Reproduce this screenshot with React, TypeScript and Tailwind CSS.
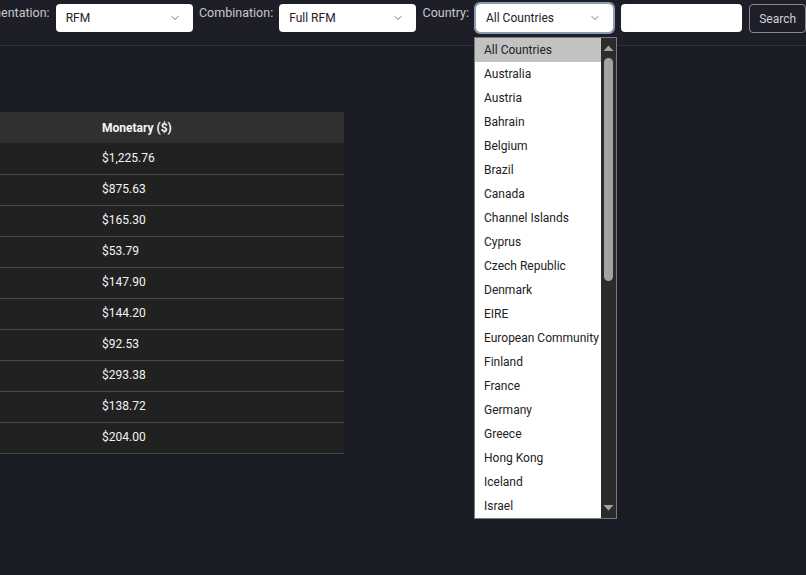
import { ChevronDown } from "lucide-react";

const countries = [
  "All Countries",
  "Australia",
  "Austria",
  "Bahrain",
  "Belgium",
  "Brazil",
  "Canada",
  "Channel Islands",
  "Cyprus",
  "Czech Republic",
  "Denmark",
  "EIRE",
  "European Community",
  "Finland",
  "France",
  "Germany",
  "Greece",
  "Hong Kong",
  "Iceland",
  "Israel",
];

const monetary = [
  "$1,225.76",
  "$875.63",
  "$165.30",
  "$53.79",
  "$147.90",
  "$144.20",
  "$92.53",
  "$293.38",
  "$138.72",
  "$204.00",
];

function Select({ value, width, focused }: { value: string; width: string; focused?: boolean }) {
  return (
    <div
      className={`${width} h-[28px] bg-white rounded-[4px] flex items-center justify-between pl-[10px] pr-[12px] text-[12px] text-[#222] ${
        focused ? "outline outline-2 outline-[#8a9bb4]" : ""
      }`}
    >
      <span>{value}</span>
      <ChevronDown size={12} strokeWidth={1.5} className="text-[#444]" />
    </div>
  );
}

export default function App() {
  return (
    <div
      className="relative w-[806px] h-[575px] overflow-hidden bg-[#191c25]"
      style={{ fontFamily: "Roboto, 'Liberation Sans', sans-serif" }}
    >
      {/* filter bar, scrolled so its first label is partly off the left edge */}
      <div className="h-[46px] bg-[#1e1e28] border-b border-[#30303a] flex items-start pt-[4px] ml-[-31px] whitespace-nowrap">
        <label className="text-[12.5px] text-[#c8c8cc] mr-[6px] leading-[18px]">Segmentation:</label>
        <Select value="RFM" width="w-[138px]" />
        <label className="text-[12.5px] text-[#c8c8cc] ml-[6px] mr-[6px] leading-[18px]">Combination:</label>
        <Select value="Full RFM" width="w-[137px]" />
        <label className="text-[12.5px] text-[#c8c8cc] ml-[7px] mr-[7px] leading-[18px]">Country:</label>
        <Select value="All Countries" width="w-[138px]" focused />
        <input className="ml-[8px] w-[121px] h-[28px] bg-white rounded-[4px]" />
        <button className="ml-[7px] h-[29px] w-[57px] border border-[#8a8a90] rounded-[4px] text-[12px] text-[#d0d0d4]">
          Search
        </button>
      </div>

      <div className="mt-[66px] w-[344px]">
        <table className="w-full border-collapse text-[12px] text-[#f4f4f4]">
          <thead>
            <tr className="bg-[#303030] h-[31px]">
              <th className="w-[102px]"></th>
              <th className="text-left font-bold">Monetary ($)</th>
            </tr>
          </thead>
          <tbody>
            {monetary.map((m) => (
              <tr key={m} className="bg-[#212121] h-[31px] border-b border-[#484848]">
                <td></td>
                <td className="pb-[1px]">{m}</td>
              </tr>
            ))}
          </tbody>
        </table>
      </div>

      {/* open native-style option list */}
      <div className="absolute left-[474px] top-[37px] w-[143px] h-[482px] bg-white border border-[#7a7a7a] flex">
        <ul className="flex-1">
          {countries.map((c, i) => (
            <li
              key={c}
              className={`h-[24px] pl-[9px] flex items-center text-[12px] text-[#222] whitespace-nowrap ${
                i === 0 ? "bg-[#c2c2c2]" : ""
              }`}
            >
              {c}
            </li>
          ))}
        </ul>
        <div className="w-[15px] bg-[#2b2b2b] flex flex-col items-center">
          <svg width="11" height="10" viewBox="0 0 11 10" className="mt-[5px]">
            <path d="M0.5 8 L5.5 2.5 L10.5 8 Z" fill="#a3a3a3" />
          </svg>
          <div className="w-[9px] h-[223px] mt-[5px] rounded-full bg-[#a3a3a3]" />
          <div className="flex-1" />
          <svg width="11" height="10" viewBox="0 0 11 10" className="mb-[5px]">
            <path d="M0.5 2 L5.5 7.5 L10.5 2 Z" fill="#a3a3a3" />
          </svg>
        </div>
      </div>
    </div>
  );
}
